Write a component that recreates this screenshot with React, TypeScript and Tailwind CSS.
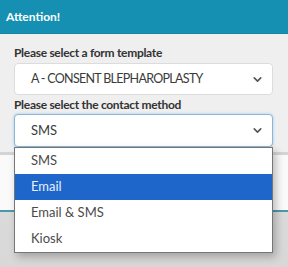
import { ChevronDown } from "lucide-react";

const options = ["SMS", "Email", "Email & SMS", "Kiosk"];

export default function App() {
  return (
    <div className="w-[288px] h-[267px] overflow-hidden bg-gradient-to-b from-[#e4e4e4] to-[#d8d8d8] font-['Lato',sans-serif]">
      {/* header */}
      <div className="h-[34px] bg-[#1690b2] flex items-center px-[6px] border-b border-[#1584a4]">
        <span className="text-white font-bold text-[12px]">Attention!</span>
      </div>

      {/* body */}
      <div className="bg-[#efefef] px-[14px] pt-[10px] h-[121px] border-b-[3px] border-[#d4d4d4]">
        <label className="block text-[12px] tracking-[-0.3px] font-bold text-[#333] leading-[18px]">
          Please select a form template
        </label>
        <div className="mt-[1px] mr-[1px] h-[32px] bg-white border border-[#dcdcdc] rounded-[4px] flex items-center justify-between pl-[16px] pr-[8px]">
          <span className="text-[12.5px] tracking-[-0.7px] text-[#3a3a3a]">A - CONSENT BLEPHAROPLASTY</span>
          <ChevronDown size={13} strokeWidth={3} className="text-[#555]" />
        </div>

        <label className="block text-[12px] tracking-[-0.3px] font-bold text-[#333] leading-[18px] mt-[1px]">
          Please select the contact method
        </label>
        <div className="relative mr-[1px]">
          <div className="h-[33px] bg-white border border-[#8cb6d8] rounded-[4px] shadow-[0_0_3px_#9cc9ec] flex items-center justify-between pl-[16px] pr-[8px]">
            <span className="text-[13px] text-[#3a3a3a]">SMS</span>
            <ChevronDown size={13} strokeWidth={3} className="text-[#555]" />
          </div>

          {/* open list */}
          <ul className="absolute left-0 right-0 top-[33px] z-10 bg-white border border-[#767676] shadow-[3px_4px_8px_rgba(0,0,0,0.25)]">
            {options.map((o) => (
              <li
                key={o}
                className={
                  o === "Email"
                    ? "h-[26px] flex items-center pl-[16px] text-[13px] bg-[#1e66c9] text-[#e8f0ff]"
                    : "h-[26px] flex items-center pl-[16px] text-[13px] text-[#4a4a4a]"
                }
              >
                {o}
              </li>
            ))}
          </ul>
        </div>
      </div>

      {/* footer */}
      <div className="h-[57px] bg-[#fafafa] border-b-[2px] border-[#4b98ab]" />
    </div>
  );
}
